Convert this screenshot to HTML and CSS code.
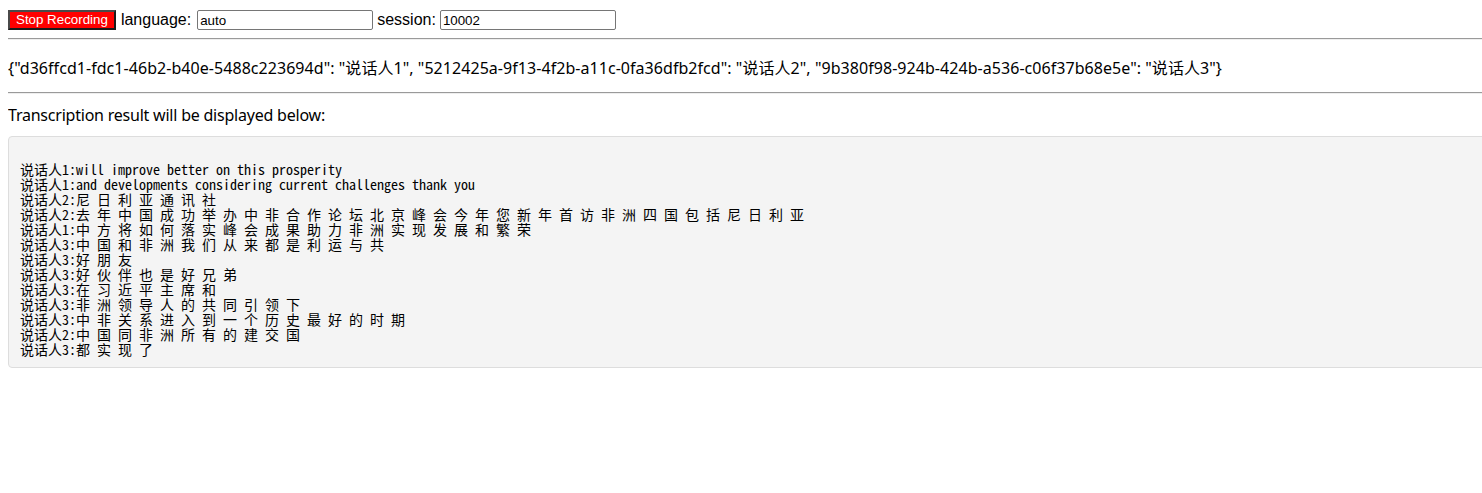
FILE: index.html
```html
<!DOCTYPE html>
<html>
<head>
<meta charset="utf-8">
<title>Transcription</title>
<link rel="stylesheet" href="styles.css">
</head>
<body>
<div class="controls">
  <button class="stop-btn">Stop Recording</button>
  <label class="lbl">language:</label>
  <input class="field" type="text" value="auto">
  <label class="lbl lbl-session">session:</label>
  <input class="field" type="text" value="10002">
</div>
<hr class="rule">
<p class="speakers">{"d36ffcd1-fdc1-46b2-b40e-5488c223694d": "说话人1", "5212425a-9f13-4f2b-a11c-0fa36dfb2fcd": "说话人2", "9b380f98-924b-424b-a536-c06f37b68e5e": "说话人3"}</p>
<hr class="rule">
<p class="caption">Transcription result will be displayed below:</p>
<pre class="result">

说话人1:will improve better on this prosperity
说话人1:and developments considering current challenges thank you
说话人2:尼 日 利 亚 通 讯 社
说话人2:去 年 中 国 成 功 举 办 中 非 合 作 论 坛 北 京 峰 会 今 年 您 新 年 首 访 非 洲 四 国 包 括 尼 日 利 亚
说话人1:中 方 将 如 何 落 实 峰 会 成 果 助 力 非 洲 实 现 发 展 和 繁 荣
说话人3:中 国 和 非 洲 我 们 从 来 都 是 利 运 与 共
说话人3:好 朋 友
说话人3:好 伙 伴 也 是 好 兄 弟
说话人3:在 习 近 平 主 席 和
说话人3:非 洲 领 导 人 的 共 同 引 领 下
说话人3:中 非 关 系 进 入 到 一 个 历 史 最 好 的 时 期
说话人2:中 国 同 非 洲 所 有 的 建 交 国
说话人3:都 实 现 了</pre>
</body>
</html>
```
FILE: styles.css
```css
html {
  overflow-x: hidden;
}
body {
  margin: 8px 0 8px 8px;
  font-family: "Liberation Sans", Arial, "Noto Sans CJK SC", sans-serif;
  font-size: 16px;
  color: #000;
  background: #fff;
}
.controls {
  display: flex;
  align-items: center;
  height: 22px;
  margin-top: 1px;
}
.stop-btn {
  font-family: "Liberation Sans", Arial, sans-serif;
  font-size: 13.33px;
  color: #fff;
  background: #ff0000;
  border: 2px solid;
  border-color: #4a4a4a #1a1a1a #1a1a1a #4a4a4a;
  padding: 0 6px;
  height: 20px;
  line-height: 16px;
  margin-right: 5px;
}
.lbl {
  margin-right: 6px;
  line-height: 18px;
}
.lbl-session {
  margin-right: 4px;
}
.field {
  font-family: "Liberation Sans", Arial, sans-serif;
  font-size: 13.33px;
  width: 176px;
  height: 20px;
  box-sizing: border-box;
  border: 1px solid #767676;
  border-radius: 2px;
  padding: 1px 2px;
  margin: 0 4px 0 0;
}
.rule {
  margin: 7px 0 0 0;
  border: 0;
  border-top: 1px solid #9a9a9a;
  border-bottom: 1px solid #eeeeee;
  height: 0;
}
.speakers {
  margin: 16px 0 12px 0;
  line-height: 24px;
  font-family: "Noto Sans", "Noto Sans CJK SC", sans-serif;
  letter-spacing: 0.05px;
}
.caption {
  margin: 9px 0 9px 0;
  line-height: 24px;
  font-family: "Noto Sans", "Noto Sans CJK SC", sans-serif;
  letter-spacing: -0.22px;
}
.result {
  margin: 0 -20px 0 0;
  background: #f4f4f4;
  border: 1px solid #dddddd;
  border-radius: 4px;
  padding: 10px 11px;
  font-family: "Noto Sans Mono CJK SC", "Liberation Mono", "Noto Sans CJK SC", monospace;
  font-size: 14px;
  line-height: 15px;
  color: #000;
}
```
